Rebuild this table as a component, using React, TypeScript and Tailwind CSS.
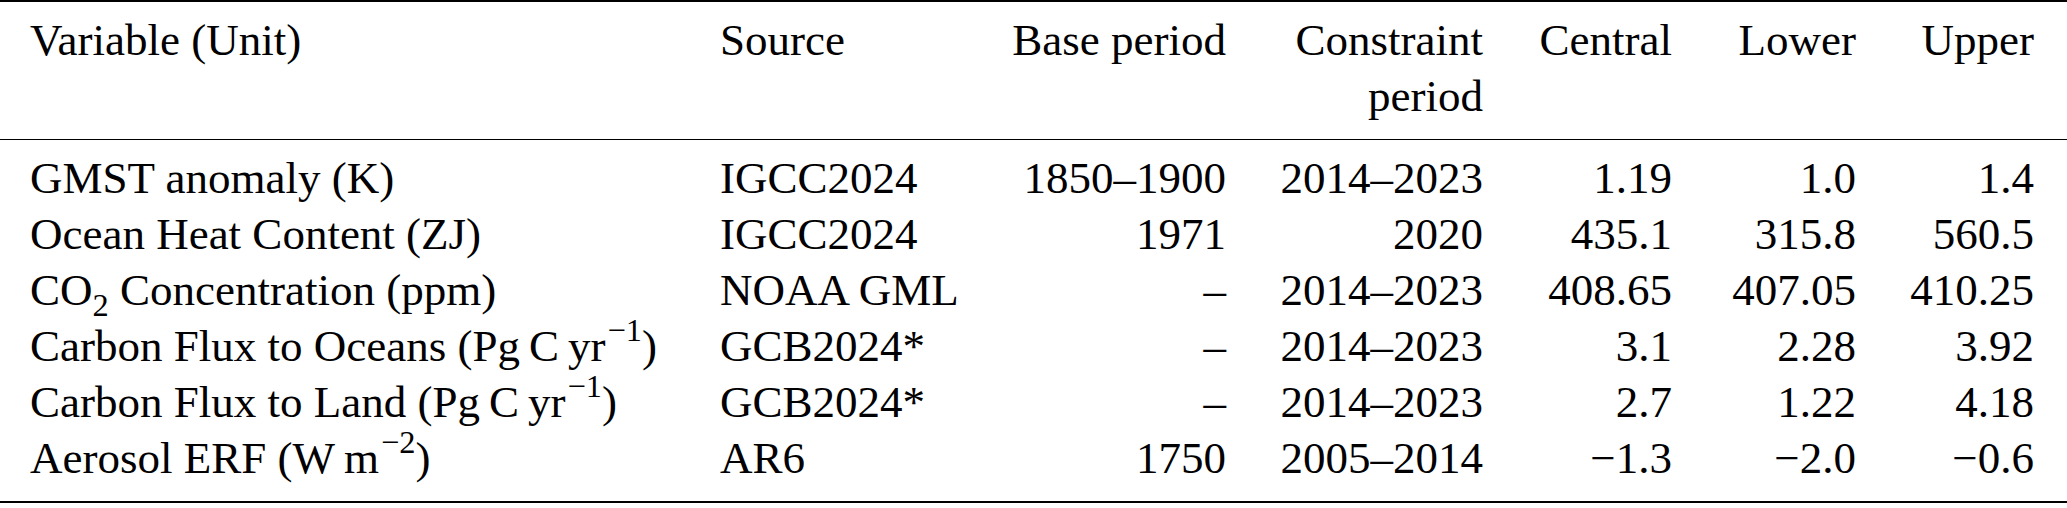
import React from "react";

type Row = {
  variable: React.ReactNode;
  source: string;
  base: string;
  constraint: string;
  central: string;
  lower: string;
  upper: string;
};

const THIN = "\u2009";

const Sup = ({ children }: { children: React.ReactNode }) => (
  <sup className="text-[0.72em] top-[-0.62em] pl-[2px]">{children}</sup>
);

const rows: Row[] = [
  {
    variable: "GMST anomaly (K)",
    source: "IGCC2024",
    base: "1850–1900",
    constraint: "2014–2023",
    central: "1.19",
    lower: "1.0",
    upper: "1.4",
  },
  {
    variable: "Ocean Heat Content (ZJ)",
    source: "IGCC2024",
    base: "1971",
    constraint: "2020",
    central: "435.1",
    lower: "315.8",
    upper: "560.5",
  },
  {
    variable: (
      <>
        CO<sub className="text-[0.72em] bottom-[-0.35em]">2</sub> Concentration (ppm)
      </>
    ),
    source: "NOAA GML",
    base: "–",
    constraint: "2014–2023",
    central: "408.65",
    lower: "407.05",
    upper: "410.25",
  },
  {
    variable: (
      <>
        Carbon Flux to Oceans (Pg{THIN}C{THIN}yr<Sup>−1</Sup>)
      </>
    ),
    source: "GCB2024*",
    base: "–",
    constraint: "2014–2023",
    central: "3.1",
    lower: "2.28",
    upper: "3.92",
  },
  {
    variable: (
      <>
        Carbon Flux to Land (Pg{THIN}C{THIN}yr<Sup>−1</Sup>)
      </>
    ),
    source: "GCB2024*",
    base: "–",
    constraint: "2014–2023",
    central: "2.7",
    lower: "1.22",
    upper: "4.18",
  },
  {
    variable: (
      <>
        Aerosol ERF (W{THIN}m<Sup>−2</Sup>)
      </>
    ),
    source: "AR6",
    base: "1750",
    constraint: "2005–2014",
    central: "−1.3",
    lower: "−2.0",
    upper: "−0.6",
  },
];

const grid =
  "grid grid-cols-[690px_260px_246px_257px_189px_184px_178px] pl-[30px] pr-[33px] whitespace-nowrap";

export default function App() {
  return (
    <div
      className="w-[2067px] h-[508px] bg-white text-black text-[45px] leading-[56px]"
      style={{ fontFamily: '"Liberation Serif", "Times New Roman", serif' }}
    >
      <div className="border-t-2 border-b-[1.5px] border-black">
        <div className={`${grid} pt-[10px] pb-[15px]`}>
          <div>Variable (Unit)</div>
          <div>Source</div>
          <div className="text-right">Base period</div>
          <div className="text-right">
            Constraint
            <br />
            period
          </div>
          <div className="text-right">Central</div>
          <div className="text-right">Lower</div>
          <div className="text-right">Upper</div>
        </div>
      </div>
      <div className="border-b-2 border-black pt-[10px] pb-[15px]">
        {rows.map((r, i) => (
          <div key={i} className={grid}>
            <div>{r.variable}</div>
            <div>{r.source}</div>
            <div className="text-right">{r.base}</div>
            <div className="text-right">{r.constraint}</div>
            <div className="text-right">{r.central}</div>
            <div className="text-right">{r.lower}</div>
            <div className="text-right">{r.upper}</div>
          </div>
        ))}
      </div>
    </div>
  );
}
